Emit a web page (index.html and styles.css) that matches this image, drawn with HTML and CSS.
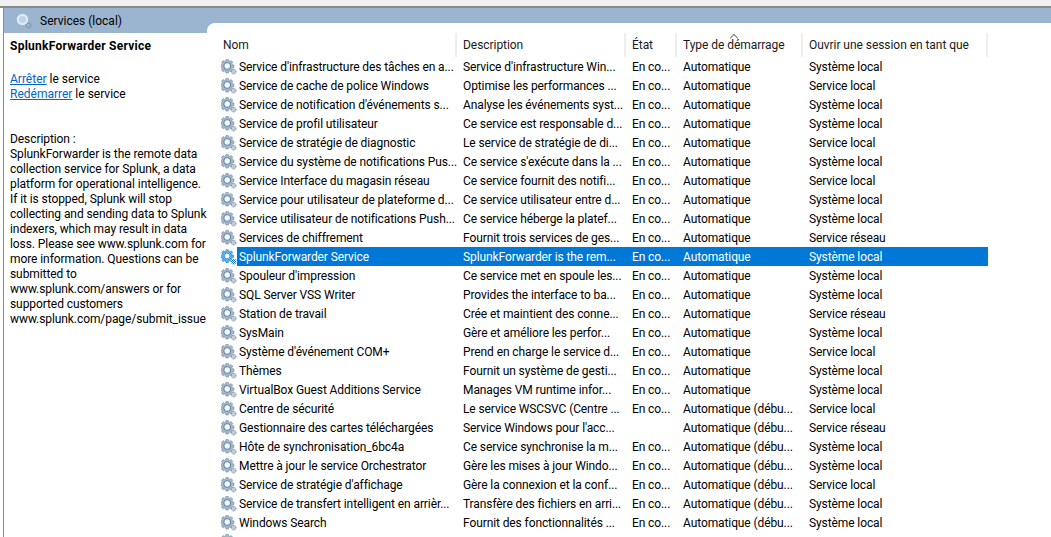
FILE: index.html
```html
<!DOCTYPE html>
<html lang="fr">
<head>
	<meta charset="utf-8">
	<title>Services (local)</title>
	<link rel="stylesheet" href="styles.css">
</head>
<body>
	<svg class="sprites" width="0" height="0">
		<defs>
			<pattern id="dither" width="2" height="2" patternUnits="userSpaceOnUse">
				<rect width="2" height="2" fill="#ffffff"/>
				<rect width="1" height="1" fill="#0078d7"/>
				<rect x="1" y="1" width="1" height="1" fill="#0078d7"/>
			</pattern>
			<path id="cog" d="M6 .5h3l.4 1.8 1.3.6 1.6-1 2.1 2.1-1 1.6.6 1.3 1.8.4v3l-1.8.4-.6 1.3 1 1.6-2.1 2.1-1.6-1-1.3.6-.4 1.8H6l-.4-1.8-1.3-.6-1.6 1L.6 13.6l1-1.6L1 10.7-.5 10.3v-3L1 6.9l.6-1.3-1-1.6 2.1-2.1 1.6 1 1.3-.6z" transform="scale(.82)"/>
			<g id="svc">
				<use href="#cog" fill="#a3b6ca" stroke="#6f8aa6" stroke-width=".7"/>
				<circle cx="6.2" cy="7" r="3.4" fill="#f2f7fc" stroke="#5a7a9c" stroke-width="1"/>
				<circle cx="12.6" cy="12.6" r="2.4" fill="#c3ccd6" stroke="#7b8a9a" stroke-width="1" stroke-dasharray="1 .6"/>
			</g>
			<g id="svc-selected">
				<use href="#cog" fill="#0078d7"/>
				<use href="#cog" fill="url(#dither)" opacity=".7"/>
				<circle cx="6.2" cy="7" r="2.2" fill="#ffffff"/>
				<circle cx="12.6" cy="12.6" r="2.8" fill="url(#dither)"/>
			</g>
			<g id="svc-title">
				<circle cx="6.5" cy="6.5" r="4.6" fill="#b9d3ea" stroke="#dfeaf5" stroke-width="2.4"/>
				<circle cx="12.6" cy="12.4" r="2.3" fill="none" stroke="#7f8fa3" stroke-width="1.3" stroke-dasharray="1 .7"/>
			</g>
		</defs>
	</svg>

	<div class="top-band"></div>
	<div class="frame">
		<aside class="side">
			<div class="title-bar">
				<svg class="icon" viewBox="0 0 16 16"><use href="#svc-title"/></svg>
				<span>Services (local)</span>
			</div>
			<div class="details">
				<h1>SplunkForwarder Service</h1>
				<p class="actions"><a href="#">Arrêter</a> le service<br><a href="#">Redémarrer</a> le service</p>
				<p class="desc">Description :<br>SplunkForwarder is the remote data collection service for Splunk, a data platform for operational intelligence. If it is stopped, Splunk will stop collecting and sending data to Splunk indexers, which may result in data loss. Please see www.splunk.com for more information. Questions can be submitted to www.splunk.com/answers or for supported customers www.splunk.com/page/submit_issue</p>
			</div>
		</aside>
		<main class="pane">
			<table class="services">
				<colgroup>
					<col class="col-name"><col class="col-desc"><col class="col-state"><col class="col-start"><col class="col-logon">
				</colgroup>
				<thead>
					<tr>
						<th>Nom</th>
						<th>Description</th>
						<th>État</th>
						<th class="sorted">Type de démarrage</th>
						<th>Ouvrir une session en tant que</th>
					</tr>
				</thead>
				<tbody>
					<tr><td><svg class="icon" viewBox="0 0 16 16"><use href="#svc"/></svg><span>Service d'infrastructure des tâches en a...</span></td><td>Service d'infrastructure Win...</td><td>En co...</td><td>Automatique</td><td>Système local</td></tr>
					<tr><td><svg class="icon" viewBox="0 0 16 16"><use href="#svc"/></svg><span>Service de cache de police Windows</span></td><td>Optimise les performances ...</td><td>En co...</td><td>Automatique</td><td>Service local</td></tr>
					<tr><td><svg class="icon" viewBox="0 0 16 16"><use href="#svc"/></svg><span>Service de notification d'événements s...</span></td><td>Analyse les événements syst...</td><td>En co...</td><td>Automatique</td><td>Système local</td></tr>
					<tr><td><svg class="icon" viewBox="0 0 16 16"><use href="#svc"/></svg><span>Service de profil utilisateur</span></td><td>Ce service est responsable d...</td><td>En co...</td><td>Automatique</td><td>Système local</td></tr>
					<tr><td><svg class="icon" viewBox="0 0 16 16"><use href="#svc"/></svg><span>Service de stratégie de diagnostic</span></td><td>Le service de stratégie de di...</td><td>En co...</td><td>Automatique</td><td>Service local</td></tr>
					<tr><td><svg class="icon" viewBox="0 0 16 16"><use href="#svc"/></svg><span>Service du système de notifications Pus...</span></td><td>Ce service s'exécute dans la ...</td><td>En co...</td><td>Automatique</td><td>Système local</td></tr>
					<tr><td><svg class="icon" viewBox="0 0 16 16"><use href="#svc"/></svg><span>Service Interface du magasin réseau</span></td><td>Ce service fournit des notifi...</td><td>En co...</td><td>Automatique</td><td>Service local</td></tr>
					<tr><td><svg class="icon" viewBox="0 0 16 16"><use href="#svc"/></svg><span>Service pour utilisateur de plateforme d...</span></td><td>Ce service utilisateur entre d...</td><td>En co...</td><td>Automatique</td><td>Système local</td></tr>
					<tr><td><svg class="icon" viewBox="0 0 16 16"><use href="#svc"/></svg><span>Service utilisateur de notifications Push...</span></td><td>Ce service héberge la platef...</td><td>En co...</td><td>Automatique</td><td>Système local</td></tr>
					<tr><td><svg class="icon" viewBox="0 0 16 16"><use href="#svc"/></svg><span>Services de chiffrement</span></td><td>Fournit trois services de ges...</td><td>En co...</td><td>Automatique</td><td>Service réseau</td></tr>
					<tr class="selected"><td><svg class="icon" viewBox="0 0 16 16"><use href="#svc-selected"/></svg><span>SplunkForwarder Service</span></td><td>SplunkForwarder is the rem...</td><td>En co...</td><td>Automatique</td><td>Système local</td></tr>
					<tr><td><svg class="icon" viewBox="0 0 16 16"><use href="#svc"/></svg><span>Spouleur d'impression</span></td><td>Ce service met en spoule les...</td><td>En co...</td><td>Automatique</td><td>Système local</td></tr>
					<tr><td><svg class="icon" viewBox="0 0 16 16"><use href="#svc"/></svg><span>SQL Server VSS Writer</span></td><td>Provides the interface to ba...</td><td>En co...</td><td>Automatique</td><td>Système local</td></tr>
					<tr><td><svg class="icon" viewBox="0 0 16 16"><use href="#svc"/></svg><span>Station de travail</span></td><td>Crée et maintient des conne...</td><td>En co...</td><td>Automatique</td><td>Service réseau</td></tr>
					<tr><td><svg class="icon" viewBox="0 0 16 16"><use href="#svc"/></svg><span>SysMain</span></td><td>Gère et améliore les perfor...</td><td>En co...</td><td>Automatique</td><td>Système local</td></tr>
					<tr><td><svg class="icon" viewBox="0 0 16 16"><use href="#svc"/></svg><span>Système d'événement COM+</span></td><td>Prend en charge le service d...</td><td>En co...</td><td>Automatique</td><td>Service local</td></tr>
					<tr><td><svg class="icon" viewBox="0 0 16 16"><use href="#svc"/></svg><span>Thèmes</span></td><td>Fournit un système de gesti...</td><td>En co...</td><td>Automatique</td><td>Système local</td></tr>
					<tr><td><svg class="icon" viewBox="0 0 16 16"><use href="#svc"/></svg><span>VirtualBox Guest Additions Service</span></td><td>Manages VM runtime infor...</td><td>En co...</td><td>Automatique</td><td>Système local</td></tr>
					<tr><td><svg class="icon" viewBox="0 0 16 16"><use href="#svc"/></svg><span>Centre de sécurité</span></td><td>Le service WSCSVC (Centre ...</td><td>En co...</td><td>Automatique (débu...</td><td>Service local</td></tr>
					<tr><td><svg class="icon" viewBox="0 0 16 16"><use href="#svc"/></svg><span>Gestionnaire des cartes téléchargées</span></td><td>Service Windows pour l'acc...</td><td></td><td>Automatique (débu...</td><td>Service réseau</td></tr>
					<tr><td><svg class="icon" viewBox="0 0 16 16"><use href="#svc"/></svg><span>Hôte de synchronisation_6bc4a</span></td><td>Ce service synchronise la m...</td><td>En co...</td><td>Automatique (débu...</td><td>Système local</td></tr>
					<tr><td><svg class="icon" viewBox="0 0 16 16"><use href="#svc"/></svg><span>Mettre à jour le service Orchestrator</span></td><td>Gère les mises à jour Windo...</td><td>En co...</td><td>Automatique (débu...</td><td>Système local</td></tr>
					<tr><td><svg class="icon" viewBox="0 0 16 16"><use href="#svc"/></svg><span>Service de stratégie d'affichage</span></td><td>Gère la connexion et la conf...</td><td>En co...</td><td>Automatique (débu...</td><td>Service local</td></tr>
					<tr><td><svg class="icon" viewBox="0 0 16 16"><use href="#svc"/></svg><span>Service de transfert intelligent en arrièr...</span></td><td>Transfère des fichiers en arri...</td><td>En co...</td><td>Automatique (débu...</td><td>Système local</td></tr>
					<tr><td><svg class="icon" viewBox="0 0 16 16"><use href="#svc"/></svg><span>Windows Search</span></td><td>Fournit des fonctionnalités ...</td><td>En co...</td><td>Automatique (débu...</td><td>Système local</td></tr>
					<tr><td><svg class="icon" viewBox="0 0 16 16"><use href="#svc"/></svg><span></span></td><td></td><td></td><td></td><td></td></tr>
				</tbody>
			</table>
		</main>
	</div>
</body>
</html>
```

FILE: styles.css
```css
html, body {
	height: 100%;
}
body {
	margin: 0;
	overflow: hidden;
	background-color: white;
	font-family: Roboto, "Noto Sans", sans-serif;
	font-size: 12px;
	color: #000;
}
.sprites {
	display: block;
	height: 0;
}
.top-band {
	height: 6px;
	background-color: #f0f0f0;
	border-bottom: 2px solid #8a8a8a;
}
.frame {
	display: flex;
	height: 529px;
	margin-left: 3px;
	border-left: 1px solid #8a8a8a;
	background-color: #9bb4d0;
}
.icon {
	display: block;
	flex: none;
	width: 16px;
	height: 16px;
}

/* left panel */
.side {
	flex: none;
	width: 203px;
	display: flex;
	flex-direction: column;
}
.title-bar {
	display: flex;
	align-items: center;
	gap: 8px;
	height: 25px;
	padding-left: 12px;
}
.details {
	flex: 1;
	background-color: white;
	padding: 6px 0 0 6px;
	line-height: 15px;
}
.details h1 {
	margin: 0;
	font-size: 12px;
	font-weight: bold;
	line-height: 15px;
	letter-spacing: 0.25px;
}
.actions {
	margin: 18px 0 0;
}
.actions a {
	color: #0066cc;
}
.desc {
	width: 198px;
	margin: 30px 0 0;
	letter-spacing: -0.08px;
}

/* service list */
.pane {
	flex: 1;
	margin-top: 15px;
	padding-left: 10px;
	background-color: white;
	border-top-left-radius: 8px;
	overflow: hidden;
}
.services {
	table-layout: fixed;
	border-collapse: separate;
	border-spacing: 0;
	width: 771px;
	margin-top: 10px;
}
.col-name { width: 240px; }
.col-desc { width: 169px; }
.col-state { width: 51px; }
.col-start { width: 126px; }
.col-logon { width: 185px; }

th {
	position: relative;
	height: 24px;
	padding: 0 0 0 6px;
	box-sizing: border-box;
	font-weight: normal;
	text-align: left;
	color: #1a1a1a;
	border-right: 2px solid #eeeeee;
	letter-spacing: -0.05px;
}
.sorted::before {
	content: "";
	position: absolute;
	left: 54px;
	top: 2px;
	width: 5px;
	height: 5px;
	border-top: 1px solid #777;
	border-left: 1px solid #777;
	transform: rotate(45deg);
}
td {
	height: 19px;
	padding: 0 0 0 6px;
	white-space: nowrap;
	overflow: hidden;
	letter-spacing: -0.1px;
}
td:first-child {
	display: flex;
	align-items: center;
	padding-left: 4px;
}
td:first-child span {
	flex: 1;
	height: 19px;
	line-height: 21px;
	padding-left: 2px;
}
.selected td,
.selected td:first-child span {
	background-color: #0078d7;
	color: white;
}
.selected td:first-child {
	background-color: transparent;
}
```
